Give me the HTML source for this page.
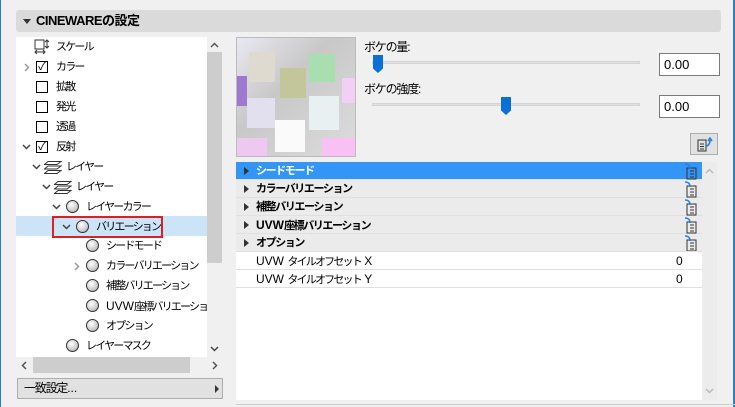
<!DOCTYPE html>
<html><head><meta charset="utf-8"><style>
*{box-sizing:border-box;margin:0;padding:0}
body{width:735px;height:407px;background:#f0f0f0;font-family:"Liberation Sans","Noto Sans CJK JP",sans-serif;font-size:11px;letter-spacing:-1.8px;color:#000;position:relative;overflow:hidden}
.l{letter-spacing:0;font-size:12px}
.abs{position:absolute}
.hdr{left:16px;top:10px;width:705px;height:22px;background:#dadada;border-radius:3px;font-weight:bold;font-size:13px;letter-spacing:-0.5px;line-height:22px;padding-left:20px}
.hdr:before{content:"";position:absolute;left:7px;top:9px;border-left:4px solid transparent;border-right:4px solid transparent;border-top:5px solid #333}
.tree{left:16px;top:37px;width:191px;height:320px;background:#fff;overflow:hidden}
.row{position:absolute;height:20px;line-height:20px;white-space:nowrap}
.cb{position:absolute;width:12px;height:12px;border:1px solid #000;top:4px}
.ball{position:absolute;width:13px;height:13px;border-radius:50%;border:1.5px solid #333;background:radial-gradient(circle at 40% 35%,#fff,#ccc 60%,#999);top:3px}
.chev{position:absolute;left:0;top:7px}
.vs{left:207px;top:37px;width:15px;height:320px;background:#f0f0f0}
.prop{left:236px;top:162px;width:466px;height:238px;background:#fff}
.prow{position:absolute;left:0;width:466px;height:18px;line-height:18px;padding-left:20px;border-bottom:1px solid #e0e0e0}
.ph{background:#ebebeb;font-weight:bold;letter-spacing:-1.4px}
.ph:before{content:"";position:absolute;left:8px;top:5px;border-top:4px solid transparent;border-bottom:4px solid transparent;border-left:5px solid #333}
.inp{position:absolute;width:61px;height:23px;border:1px solid #7a7a7a;background:#fff;font-size:13px;letter-spacing:0;line-height:21px;padding-left:4px}
.lab{font-size:12px;letter-spacing:-1.2px}
</style></head><body>
<svg width="0" height="0" style="position:absolute"><defs>
<symbol id="dn" viewBox="0 0 9 6"><path d="M1 1l3.5 3.5L8 1" fill="none" stroke="#444" stroke-width="1.5"/></symbol>
<symbol id="rt" viewBox="0 0 6 9"><path d="M1 1l3.5 3.5L1 8" fill="none" stroke="#999" stroke-width="1.5"/></symbol>
<symbol id="ly" viewBox="0 0 18 14"><path d="M4 1.5h13l-4 3H0.5zM4 6h13l-4 3H0.5zM4 10.5h13l-4 3H0.5z" fill="#fff" stroke="#333"/></symbol>
</defs></svg>
<div class="abs" style="left:0;top:0;width:1px;height:407px;background:#2a7fd4"></div>
<div class="abs" style="left:733px;top:0;width:2px;height:407px;background:#2a7fd4"></div>
<div class="abs hdr">CINEWAREの設定</div>

<div class="abs tree">
 <div class="row" style="left:18px;top:0"><svg class="abs" style="left:0;top:2px" width="16" height="16"><rect x="1" y="1" width="9" height="9" fill="none" stroke="#333"/><path d="M13 1v8M11 3l2-2 2 2M11 7l2 2 2-2M1 13h10M3 11l-2 2 2 2M9 11l2 2-2 2" stroke="#333" fill="none"/></svg><span style="margin-left:22px">スケール</span></div>
 <div class="row" style="left:6px;top:20px"><svg class="chev" style="left:2px;top:6px" width="6" height="9"><use href="#rt"/></svg><span class="cb" style="left:14px;text-align:center;line-height:10px;font-size:11px;letter-spacing:0">✓</span><span style="margin-left:34px">カラー</span></div>
 <div class="row" style="left:6px;top:40px"><span class="cb" style="left:14px"></span><span style="margin-left:34px">拡散</span></div>
 <div class="row" style="left:6px;top:60px"><span class="cb" style="left:14px"></span><span style="margin-left:34px">発光</span></div>
 <div class="row" style="left:6px;top:80px"><span class="cb" style="left:14px"></span><span style="margin-left:34px">透過</span></div>
 <div class="row" style="left:6px;top:100px"><svg class="chev" width="9" height="6"><use href="#dn"/></svg><span class="cb" style="left:14px;text-align:center;line-height:10px;font-size:11px;letter-spacing:0">✓</span><span style="margin-left:34px">反射</span></div>
 <div class="row" style="left:16px;top:120px"><svg class="chev" width="9" height="6"><use href="#dn"/></svg><svg class="abs" style="left:12px;top:3px" width="18" height="14"><use href="#ly"/></svg><span style="margin-left:34px">レイヤー</span></div>
 <div class="row" style="left:26px;top:140px"><svg class="chev" width="9" height="6"><use href="#dn"/></svg><svg class="abs" style="left:12px;top:3px" width="18" height="14"><use href="#ly"/></svg><span style="margin-left:34px">レイヤー</span></div>
 <div class="row" style="left:36px;top:160px"><svg class="chev" width="9" height="6"><use href="#dn"/></svg><span class="ball" style="left:14px"></span><span style="margin-left:34px">レイヤーカラー</span></div>
 <div class="row" style="left:0;top:179px;width:191px;background:#cce4f7"></div>
 <div class="row" style="left:36px;top:179px;width:111px;height:22px;border:2px solid #e02020"></div>
 <div class="row" style="left:46px;top:180px"><svg class="chev" width="9" height="6"><use href="#dn"/></svg><span class="ball" style="left:14px"></span><span style="margin-left:34px">バリエーション</span></div>
 <div class="row" style="left:56px;top:199px"><span class="ball" style="left:14px"></span><span style="margin-left:34px">シードモード</span></div>
 <div class="row" style="left:56px;top:219px"><svg class="chev" style="left:2px;top:6px" width="6" height="9"><use href="#rt"/></svg><span class="ball" style="left:14px"></span><span style="margin-left:34px">カラーバリエーション</span></div>
 <div class="row" style="left:56px;top:239px"><span class="ball" style="left:14px"></span><span style="margin-left:34px">補整バリエーション</span></div>
 <div class="row" style="left:56px;top:259px"><span class="ball" style="left:14px"></span><span style="margin-left:34px"><span class="l">UVW</span>座標バリエーション</span></div>
 <div class="row" style="left:56px;top:279px"><span class="ball" style="left:14px"></span><span style="margin-left:34px">オプション</span></div>
 <div class="row" style="left:36px;top:299px"><span class="ball" style="left:14px"></span><span style="margin-left:34px">レイヤーマスク</span></div>
</div>
<div class="abs vs"><div class="abs" style="left:0;top:15px;width:15px;height:211px;background:#cdcdcd"></div>
<svg class="abs" style="left:3px;top:5px" width="9" height="6"><path d="M1 5l3.5-3.5L8 5" fill="none" stroke="#555" stroke-width="1.5"/></svg>
<svg class="abs" style="left:3px;top:309px" width="9" height="6"><use href="#dn"/></svg></div>
<div class="abs" style="left:16px;top:357px;width:206px;height:16px;background:#f0f0f0"><div class="abs" style="left:17px;top:0;width:157px;height:16px;background:#cdcdcd"></div>
<svg class="abs" style="left:5px;top:4px" width="6" height="9"><path d="M5 1L1.5 4.5 5 8" fill="none" stroke="#555" stroke-width="1.5"/></svg>
<svg class="abs" style="left:196px;top:4px" width="6" height="9"><path d="M1 1l3.5 3.5L1 8" fill="none" stroke="#555" stroke-width="1.5"/></svg></div>
<div class="abs lab" style="left:17px;top:378px;width:206px;height:21px;border:1px solid #adadad;background:#e1e1e1;line-height:19px;padding-left:6px">一致設定<span class="l">...</span><span class="abs" style="right:3px;top:6px;border-top:4px solid transparent;border-bottom:4px solid transparent;border-left:4px solid #333"></span></div>

<div class="abs" style="left:236px;top:37px;width:120px;height:120px;border:1px solid #bbb;background:linear-gradient(135deg,#e8e8f0,#c8c8c8 40%,#dcdcdc);overflow:hidden">
 <div class="abs" style="left:12px;top:14px;width:26px;height:30px;background:#dedad0"></div>
 <div class="abs" style="left:43px;top:30px;width:26px;height:30px;background:#c3c59a"></div>
 <div class="abs" style="left:72px;top:16px;width:26px;height:28px;background:#a8deb0"></div>
 <div class="abs" style="left:0;top:38px;width:10px;height:30px;background:#9d7ad0"></div>
 <div class="abs" style="left:10px;top:60px;width:28px;height:30px;background:#e2e0ee"></div>
 <div class="abs" style="left:72px;top:58px;width:30px;height:34px;background:#e8f0f2"></div>
 <div class="abs" style="left:38px;top:82px;width:30px;height:32px;background:#fafafa"></div>
 <div class="abs" style="left:0;top:100px;width:30px;height:20px;background:#eec8f0"></div>
 <div class="abs" style="left:85px;top:100px;width:35px;height:20px;background:#f8c0f4"></div>
 <div class="abs" style="left:105px;top:40px;width:15px;height:25px;background:#f2d0f6"></div>
</div>
<div class="abs lab" style="left:364px;top:38px">ボケの量:</div>
<div class="abs" style="left:372px;top:61px;width:268px;height:3px;background:#e0e0e0;border:1px solid #d4d4d4"></div>
<div class="abs" style="left:373px;top:55px;width:10px;height:18px;background:#0a6fd6;clip-path:polygon(0 0,100% 0,100% 75%,50% 100%,0 75%)"></div>
<div class="inp" style="left:659px;top:53px">0.00</div>
<div class="abs lab" style="left:364px;top:80px">ボケの強度:</div>
<div class="abs" style="left:372px;top:103px;width:268px;height:3px;background:#e0e0e0;border:1px solid #d4d4d4"></div>
<div class="abs" style="left:501px;top:97px;width:10px;height:18px;background:#0a6fd6;clip-path:polygon(0 0,100% 0,100% 75%,50% 100%,0 75%)"></div>
<div class="inp" style="left:659px;top:95px">0.00</div>
<div class="abs" style="left:690px;top:133px;width:28px;height:22px;border:1px solid #adadad;background:#e1e1e1"><svg class="abs" style="left:6px;top:3px" width="16" height="15"><path d="M1 3h8v11H1zM3 7h4M3 9.5h4M3 12h4" fill="none" stroke="#333"/><path d="M9 9c2 0 4-2 4-6M11 4l2-3 2 3" fill="none" stroke="#2a80e0" stroke-width="1.6"/></svg></div>

<div class="abs prop">
 <div class="prow ph" style="top:0;background:#3395f5;color:#fff">シードモード</div>
 <div class="prow ph" style="top:18px">カラーバリエーション</div>
 <div class="prow ph" style="top:36px">補整バリエーション</div>
 <div class="prow ph" style="top:54px"><span class="l">UVW</span>座標バリエーション</div>
 <div class="prow ph" style="top:72px">オプション</div>
 <div class="prow" style="top:90px"><span class="l">UVW </span>タイルオフセット<span class="l"> X</span><span class="abs l" style="left:440px">0</span></div>
 <div class="prow" style="top:108px"><span class="l">UVW </span>タイルオフセット<span class="l"> Y</span><span class="abs l" style="left:440px">0</span></div>
</div>
<svg class="abs" style="left:684px;top:163px" width="14" height="88">
 <g fill="none" stroke="#333"><path d="M3 5h9v11H3zM6 8h4M6 11h4M6 14h4"/><path d="M3 23h9v11H3zM6 26h4M6 29h4M6 32h4"/><path d="M3 41h9v11H3zM6 44h4M6 47h4M6 50h4"/><path d="M3 59h9v11H3zM6 62h4M6 65h4M6 68h4"/><path d="M3 77h9v11H3zM6 80h4M6 83h4M6 86h4"/></g>
 <g fill="none" stroke="#2a80e0" stroke-width="1.6"><path d="M1 1c3 0 5 1 5 5"/><path d="M1 19c3 0 5 1 5 5"/><path d="M1 37c3 0 5 1 5 5"/><path d="M1 55c3 0 5 1 5 5"/><path d="M1 73c3 0 5 1 5 5"/></g>
</svg>
<div class="abs" style="left:702px;top:162px;width:15px;height:238px;background:#ececec">
<svg class="abs" style="left:3px;top:6px" width="9" height="6"><path d="M1 5l3.5-3.5L8 5" fill="none" stroke="#bbb" stroke-width="1.5"/></svg>
<svg class="abs" style="left:3px;top:226px" width="9" height="6"><path d="M1 1l3.5 3.5L8 1" fill="none" stroke="#bbb" stroke-width="1.5"/></svg></div>
<div class="abs" style="left:236px;top:404px;width:499px;height:1px;background:#ccc"></div>
</body></html>
